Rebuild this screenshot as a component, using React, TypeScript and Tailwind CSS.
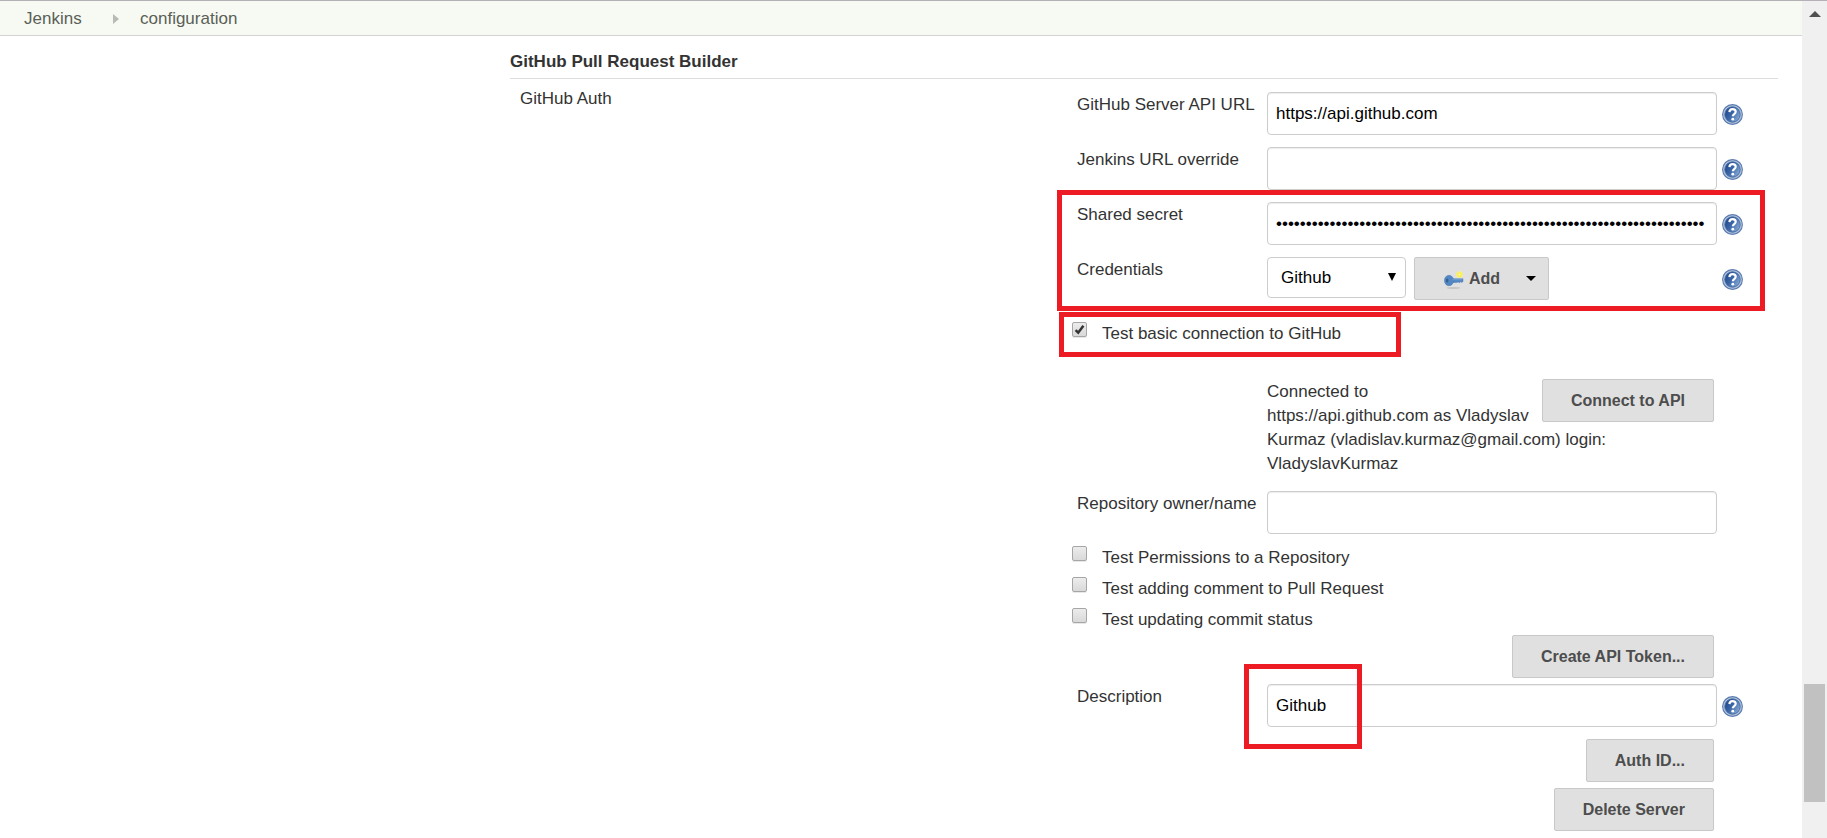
import { useId, type ReactNode } from "react";

function HelpButton({ topic }: { topic: string }) {
  const gradient = useId();
  return (
    <button type="button" aria-label={`Help for ${topic}`} className="mt-3 h-[21px] w-[21px] shrink-0">
      <svg viewBox="0 0 21 21" className="block h-full w-full" aria-hidden="true">
        <defs>
          <linearGradient id={gradient} x1="0" y1="0.2" x2="1" y2="0.8">
            <stop offset="0" stopColor="#1f4687" />
            <stop offset="0.45" stopColor="#3a66a8" />
            <stop offset="1" stopColor="#8fb0da" />
          </linearGradient>
        </defs>
        <circle cx="10.5" cy="10.5" r="9.9" fill="#b4c5de" stroke="#5b7cb0" strokeWidth="1.1" />
        <circle cx="10.5" cy="10.5" r="7.7" fill={`url(#${gradient})`} stroke="#42689f" strokeWidth="0.9" />
        <path d="M7.4 8.1C7.5 6.2 8.800 5.200 10.600 5.200c1.900 0 3.100 1 3.100 2.600 0 2.200-2.900 2.300-2.900 4.500" fill="none" stroke="#fff" strokeWidth="2.200" />
        <circle cx="10.800" cy="15.200" r="1.400" fill="#fff" />
      </svg>
    </button>
  );
}

function KeyIcon() {
  return (
    <svg viewBox="0 0 20 20" className="h-5 w-5 shrink-0" aria-hidden="true">
      <ellipse cx="9.500" cy="19" rx="7" ry="0.900" fill="#c6c6c6" />
      <path d="M8 9.800h11v2.400l-1 1.300-1.300-.8-1.300 1-1.300-.8-1.500.6H8z" fill="#5287c4" stroke="#4a78b3" strokeWidth="0.500" />
      <ellipse cx="5" cy="11.500" rx="4.600" ry="5.200" fill="#5287c4" stroke="#4a78b3" strokeWidth="0.500" />
      <ellipse cx="3.200" cy="11.500" rx="1.200" ry="1.900" fill="#34608f" />
      <path d="M8.500 10.700h10" stroke="#83a9d8" strokeWidth="0.700" />
      <circle cx="15.500" cy="5.600" r="3.300" fill="#f8ef7a" />
      <circle cx="15.500" cy="5.600" r="2.200" fill="#fbee3c" />
      <circle cx="15.500" cy="5.600" r="1" fill="#fffcc0" />
    </svg>
  );
}

const field =
  "h-[43px] w-full min-w-0 rounded-[4px] border border-[#ccc] bg-white px-2 text-[17px] text-black shadow-[inset_0_1px_1px_rgba(0,0,0,0.075)] outline-none";

function Row({ id, label, help = true, children }: { id: string; label: string; help?: boolean; children: ReactNode }) {
  return (
    <div className="flex items-start">
      <label htmlFor={id} className="w-[195px] shrink-0 pt-px pl-[5px] whitespace-nowrap">
        {label}
      </label>
      <div className="flex min-w-0 flex-1 items-start gap-2">{children}</div>
      <div className="flex w-[26px] shrink-0 justify-end">{help && <HelpButton topic={label} />}</div>
    </div>
  );
}

function Check({ label, checked = false }: { label: string; checked?: boolean }) {
  return (
    <label className="flex items-start gap-[15px]">
      <span className="relative block h-[15px] w-[15px]">
        <input
          type="checkbox"
          defaultChecked={checked}
          className="peer block h-[15px] w-[15px] appearance-none rounded-[2px] border border-[#a6a6a6] bg-linear-to-b from-[#ececec] to-[#d9d9d9] shadow-[0_1px_0_#e8e8e8]"
        />
        <svg viewBox="0 0 15 15" className="pointer-events-none absolute inset-0 hidden h-[15px] w-[15px] peer-checked:block" aria-hidden="true">
          <path d="M3.600 8.200L6.200 10.700L11.400 3.700" fill="none" stroke="#333" strokeWidth="2.500" />
        </svg>
      </span>
      <span>{label}</span>
    </label>
  );
}

const button =
  "h-[43px] rounded-[2px] border border-[#c8c8c8] bg-[#e0e0e0] px-7 text-[16px] font-bold text-[#4d4d4d]";

function Highlight({ className }: { className: string }) {
  return <div aria-hidden="true" className={`pointer-events-none absolute border-5 border-[#ed1c24] ${className}`} />;
}

export default function App() {
  return (
    <div className="flex min-h-screen border-t border-[#b5b0b5] bg-white font-['Liberation_Sans',Arial,sans-serif] text-[17px] leading-6 text-[#333]">
      <div className="min-w-0 flex-1">
        <nav aria-label="Breadcrumb" className="flex h-[35px] items-center border-b border-[#d3d3d3] bg-[#f7faf2] pt-px pl-6 text-[#5a5f58]">
          <a href="#jenkins" className="w-[89px]">Jenkins</a>
          <svg viewBox="0 0 6 10" className="mr-[21px] h-[10px] w-[6px]" aria-hidden="true">
            <path d="M0 0L6 5L0 10z" fill="#b8bab6" />
          </svg>
          <a href="#configuration">configuration</a>
        </nav>

        <main className="mr-6 ml-[510px] pt-[14px]">
          <h1 className="border-b border-[#ddd] pb-1 font-bold">GitHub Pull Request Builder</h1>
          <div className="grid grid-cols-[562px_minmax(0,1fr)]">
            <h2 className="pt-2 pl-[10px]">GitHub Auth</h2>

            <form className="pt-[13px] pr-[35px]" onSubmit={(e) => e.preventDefault()}>
              <div className="flex flex-col gap-3">
                <Row id="api-url" label="GitHub Server API URL">
                  <input id="api-url" type="text" defaultValue="https://api.github.com" className={field} />
                </Row>
                <Row id="url-override" label="Jenkins URL override">
                  <input id="url-override" type="text" className={field} />
                </Row>
                <div className="relative flex flex-col gap-3">
                  <Row id="secret" label="Shared secret">
                    <input id="secret" type="password" autoComplete="off" defaultValue={"x".repeat(72)} className={field} />
                  </Row>
                  <Row id="credentials" label="Credentials">
                    <div className="relative">
                      <select
                        id="credentials"
                        className="block h-[41px] w-[139px] appearance-none rounded-[4px] border border-[#ccc] bg-white pl-[13px] text-[17px] text-black"
                      >
                        <option>Github</option>
                      </select>
                      <svg viewBox="0 0 8 8" className="pointer-events-none absolute top-4 right-[10px] h-2 w-2" aria-hidden="true">
                        <path d="M0 0H8L4 8z" fill="#000" />
                      </svg>
                    </div>
                    <button
                      type="button"
                      className="flex h-[43px] w-[135px] items-center rounded-[2px] border border-[#c8c8c8] bg-[#e0e0e0] pr-3 pl-[29px] text-[16px] font-bold text-[#4d4d4d]"
                    >
                      <KeyIcon />
                      <span className="ml-[5px]">Add</span>
                      <svg viewBox="0 0 10 5" className="ml-auto h-[5px] w-[10px]" aria-hidden="true">
                        <path d="M0 0H10L5 5z" fill="#000" />
                      </svg>
                    </button>
                  </Row>
                  <Highlight className="-top-3 -right-[22px] -bottom-[11px] -left-[15px]" />
                </div>
              </div>

              <div className="relative mt-[22px]">
                <Check label="Test basic connection to GitHub" checked />
                <Highlight className="-top-[10px] -left-[13px] h-[45px] w-[342px]" />
              </div>

              <div className="mt-[33px] mr-[29px] ml-[195px]">
                <button type="button" className={`float-right ${button}`}>Connect to API</button>
                <p className="pt-px">
                  Connected to
                  <br />
                  https://api.github.com as Vladyslav
                  <br />
                  Kurmaz (vladislav.kurmaz@gmail.com) login:
                  <br />
                  VladyslavKurmaz
                </p>
              </div>

              <div className="mt-[15px]">
                <Row id="repository" label="Repository owner/name" help={false}>
                  <input id="repository" type="text" className={field} />
                </Row>
              </div>

              <div className="mt-3 flex flex-col gap-[7px]">
                <Check label="Test Permissions to a Repository" />
                <Check label="Test adding comment to Pull Request" />
                <Check label="Test updating commit status" />
              </div>

              <div className="mt-[3px] mr-[29px] flex justify-end">
                <button type="button" className={button}>Create API Token...</button>
              </div>

              <div className="relative mt-[6px]">
                <Row id="description" label="Description">
                  <input id="description" type="text" defaultValue="Github" className={field} />
                </Row>
                <Highlight className="-top-5 left-[172px] h-[85px] w-[118px]" />
              </div>

              <div className="mt-3 mr-[29px] flex flex-col items-end gap-[6px]">
                <button type="button" className={button}>Auth ID...</button>
                <button type="button" className={button}>Delete Server</button>
              </div>
            </form>
          </div>
        </main>
      </div>

      <div aria-hidden="true" className="flex w-[25px] shrink-0 flex-col items-center bg-[#f0f0f0] pt-[10px]">
        <svg viewBox="0 0 12 6" className="h-[6px] w-3 shrink-0">
          <path d="M6 0L12 6H0z" fill="#505050" />
        </svg>
        <div className="mt-auto mb-9 h-[118px] w-[21px] bg-[#c1c1c1]" />
      </div>
    </div>
  );
}
